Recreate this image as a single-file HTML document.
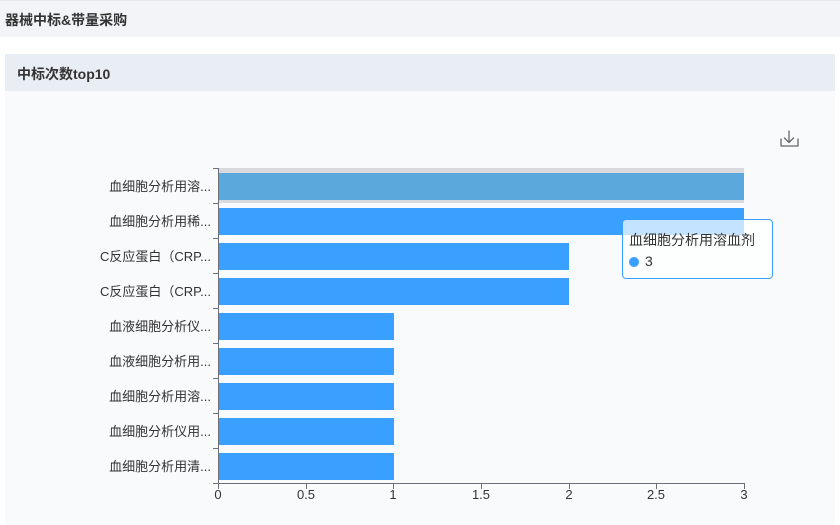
<!DOCTYPE html>
<html><head><meta charset="utf-8"><style>
body{margin:0;width:840px;height:525px;background:#fff;font-family:"Liberation Sans","Noto Sans CJK SC",sans-serif;overflow:hidden;position:relative}
.top{position:absolute;left:0;top:0;width:840px;height:37px;background:#f3f4f8;border-top:1px solid #e6e8ee;box-sizing:border-box}
.top span{position:absolute;left:5px;top:9px;font-size:14px;font-weight:bold;color:#333}
.card{position:absolute;left:5px;top:54px;width:830px;height:471px;background:#f9fafc}
.hd{height:37px;background:#e9edf4;position:relative}
.hd span{position:absolute;left:12px;top:10px;font-size:14px;font-weight:bold;color:#333}
svg{position:absolute;left:0;top:0}
.tip{position:absolute;left:622px;top:219px;width:151px;height:60px;box-sizing:border-box;border:1px solid #3aa0ff;border-radius:4px;background:rgba(255,255,255,0.7);font-size:14px;color:#333}
</style></head><body>
<div class="top"><span>器械中标&amp;带量采购</span></div>
<div class="card"><div class="hd"><span>中标次数top10</span></div></div>
<svg width="840" height="525" font-family="Liberation Sans, Noto Sans CJK SC, sans-serif" font-size="13" fill="#333">
<g stroke="#666" fill="none" stroke-width="1.3" stroke-linecap="round" stroke-linejoin="round">
<path d="M789 131v11M784.5 138l4.5 4.5 4.5-4.5M781 139v7h17v-7"/>
</g>
<rect x="219" y="168" width="525" height="35" fill="#d9dadd"/>
<rect x="219" y="173" width="525" height="27" fill="#5aa8dc"/>
<g fill="#3aa0ff">
<rect x="219" y="208" width="525" height="27"/>
<rect x="219" y="243" width="350" height="27"/>
<rect x="219" y="278" width="350" height="27"/>
<rect x="219" y="313" width="175" height="27"/>
<rect x="219" y="348" width="175" height="27"/>
<rect x="219" y="383" width="175" height="27"/>
<rect x="219" y="418" width="175" height="27"/>
<rect x="219" y="453" width="175" height="27"/>
</g>
<g stroke="#6e7079" stroke-width="1">
<path d="M218.5 168v316M218 483.5h527"/>
<path d="M213 168.5h5M213 203.5h5M213 238.5h5M213 273.5h5M213 308.5h5M213 343.5h5M213 378.5h5M213 413.5h5M213 448.5h5M213 483.5h5"/>
<path d="M218.5 484v5M306.5 484v5M393.5 484v5M481.5 484v5M569.5 484v5M656.5 484v5M744.5 484v5"/>
</g>
<g text-anchor="end">
<text x="211" y="191">血细胞分析用溶...</text>
<text x="211" y="226">血细胞分析用稀...</text>
<text x="211" y="261">C反应蛋白（CRP...</text>
<text x="211" y="296">C反应蛋白（CRP...</text>
<text x="211" y="331">血液细胞分析仪...</text>
<text x="211" y="366">血液细胞分析用...</text>
<text x="211" y="401">血细胞分析用溶...</text>
<text x="211" y="436">血细胞分析仪用...</text>
<text x="211" y="471">血细胞分析用清...</text>
</g>
<g text-anchor="middle">
<text x="218" y="499">0</text><text x="306" y="499">0.5</text><text x="393" y="499">1</text>
<text x="481" y="499">1.5</text><text x="569" y="499">2</text><text x="656" y="499">2.5</text><text x="744" y="499">3</text>
</g>
</svg>
<div class="tip"><div style="position:absolute;left:6px;top:10px">血细胞分析用溶血剂</div>
<div style="position:absolute;left:6px;top:37px;width:10px;height:10px;border-radius:50%;background:#3aa0ff"></div>
<div style="position:absolute;left:22px;top:33px">3</div></div>
</body></html>
